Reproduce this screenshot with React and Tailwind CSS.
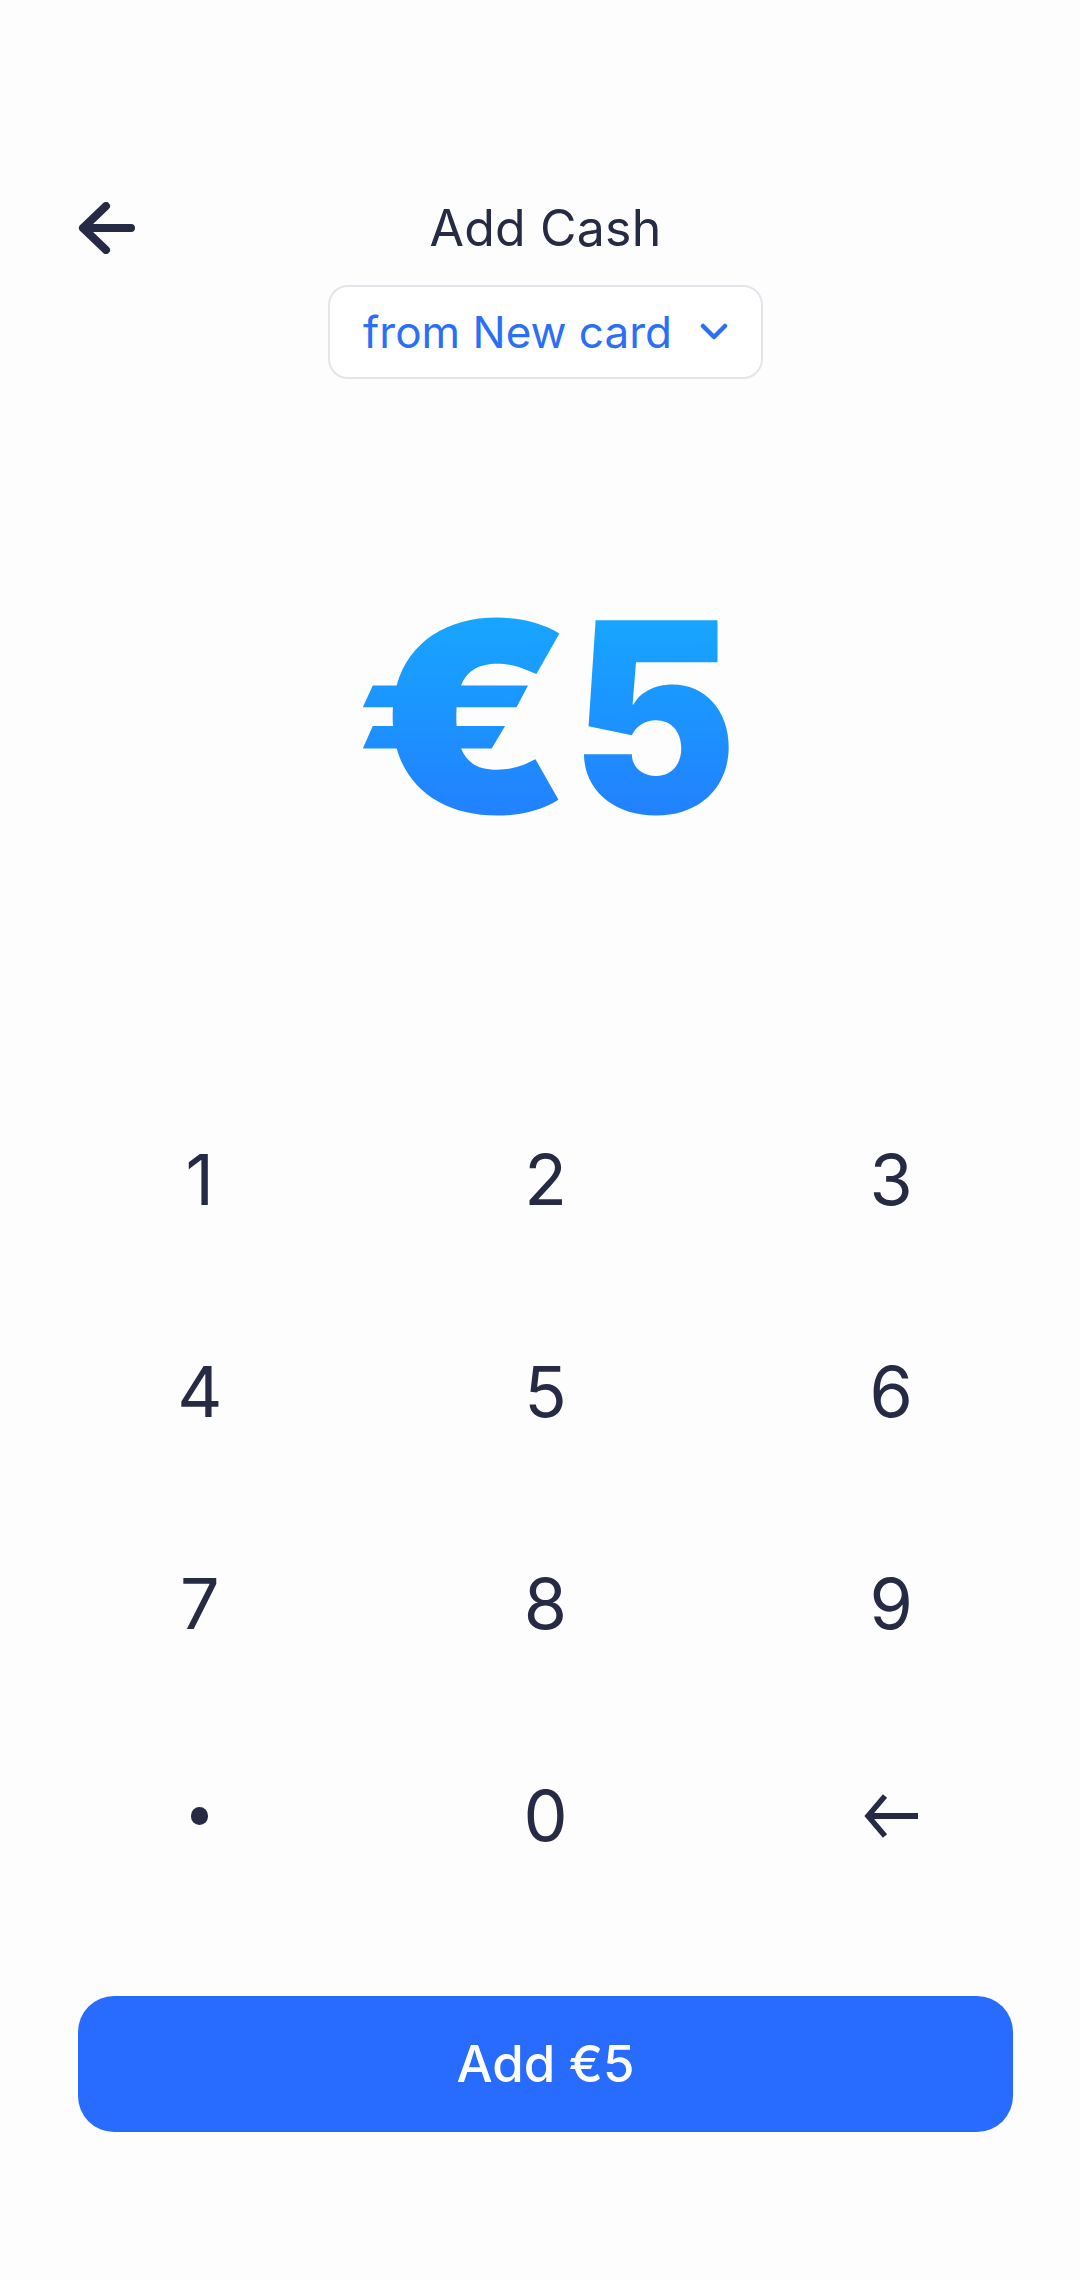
import React from "react";

const keys = ["1", "2", "3", "4", "5", "6", "7", "8", "9", "dot", "0", "back"];

function BackArrow() {
  return (
    <svg width="58" height="52" viewBox="0 0 58 52" fill="none">
      <path
        d="M29 4 L6 26 L29 48 M6 26 L54 26"
        stroke="#262a45"
        strokeWidth="8"
        strokeLinecap="round"
        strokeLinejoin="round"
      />
    </svg>
  );
}

function Chevron() {
  return (
    <svg width="28" height="18" viewBox="0 0 28 18" fill="none">
      <path
        d="M3 3 L14 14 L25 3"
        stroke="#2a6ff6"
        strokeWidth="4.5"
        strokeLinecap="round"
        strokeLinejoin="round"
      />
    </svg>
  );
}

function Backspace() {
  return (
    <svg width="56" height="44" viewBox="0 0 56 44" fill="none">
      <path d="M22 2 L5 22 L22 42" stroke="#262a45" strokeWidth="5.5" strokeLinejoin="miter" />
      <path d="M6 22 L55 22" stroke="#262a45" strokeWidth="6" />
    </svg>
  );
}

function Key({ k }) {
  return (
    <button className="h-[212px] flex items-center justify-center text-[70px] leading-none font-normal text-[#262a45]">
      {k === "dot" ? (
        <span className="block w-[17px] h-[18px] rounded-full bg-[#262a45]" />
      ) : k === "back" ? (
        <Backspace />
      ) : (
        k
      )}
    </button>
  );
}

export default function App() {
  return (
    <div
      className="w-[1080px] h-[2280px] bg-[#fdfdfd] flex flex-col"
      style={{ fontFamily: "Inter, 'Noto Sans', sans-serif" }}
    >
      <div className="pt-[198px] pl-[78px] pr-[67px]">
        <div className="grid grid-cols-[1fr_auto_1fr] items-center h-[60px]">
          <div className="flex items-center -ml-[1px]">
            <BackArrow />
          </div>
          <h1 className="text-[50px] leading-[60px] font-normal text-[#262a45] tracking-[0.2px]">
            Add Cash
          </h1>
          <div />
        </div>
        <div className="mt-[27px] flex justify-center">
          <button className="h-[94px] flex items-center gap-[28px] pl-[33px] pr-[33px] border-2 border-[#e3e5ea] rounded-[20px] bg-white">
            <span className="text-[44px] leading-none text-[#2a6ff6] font-normal">
              from New card
            </span>
            <Chevron />
          </button>
        </div>
        <div className="mt-[205px] h-[265px] flex justify-center items-center text-[265px] leading-none font-black">
          <span className="inline-block ml-[42px] -mr-[10px] origin-right scale-x-[1.2] bg-gradient-to-b from-[#16abff] to-[#247aff] bg-clip-text text-transparent">
            €
          </span>
          <span className="inline-block scale-x-[0.94] bg-gradient-to-b from-[#16abff] to-[#247aff] bg-clip-text text-transparent">
            5
          </span>
        </div>
      </div>
      <div className="mt-[225px] pl-[27px] pr-[16px] grid grid-cols-3">
        {keys.map((k) => (
          <Key key={k} k={k} />
        ))}
      </div>
      <div className="mt-[74px] pl-[78px] pr-[67px]">
        <button className="w-full h-[136px] rounded-[36px] bg-[#276bff] text-white text-[51px] font-medium flex items-center justify-center">
          Add €5
        </button>
      </div>
    </div>
  );
}
